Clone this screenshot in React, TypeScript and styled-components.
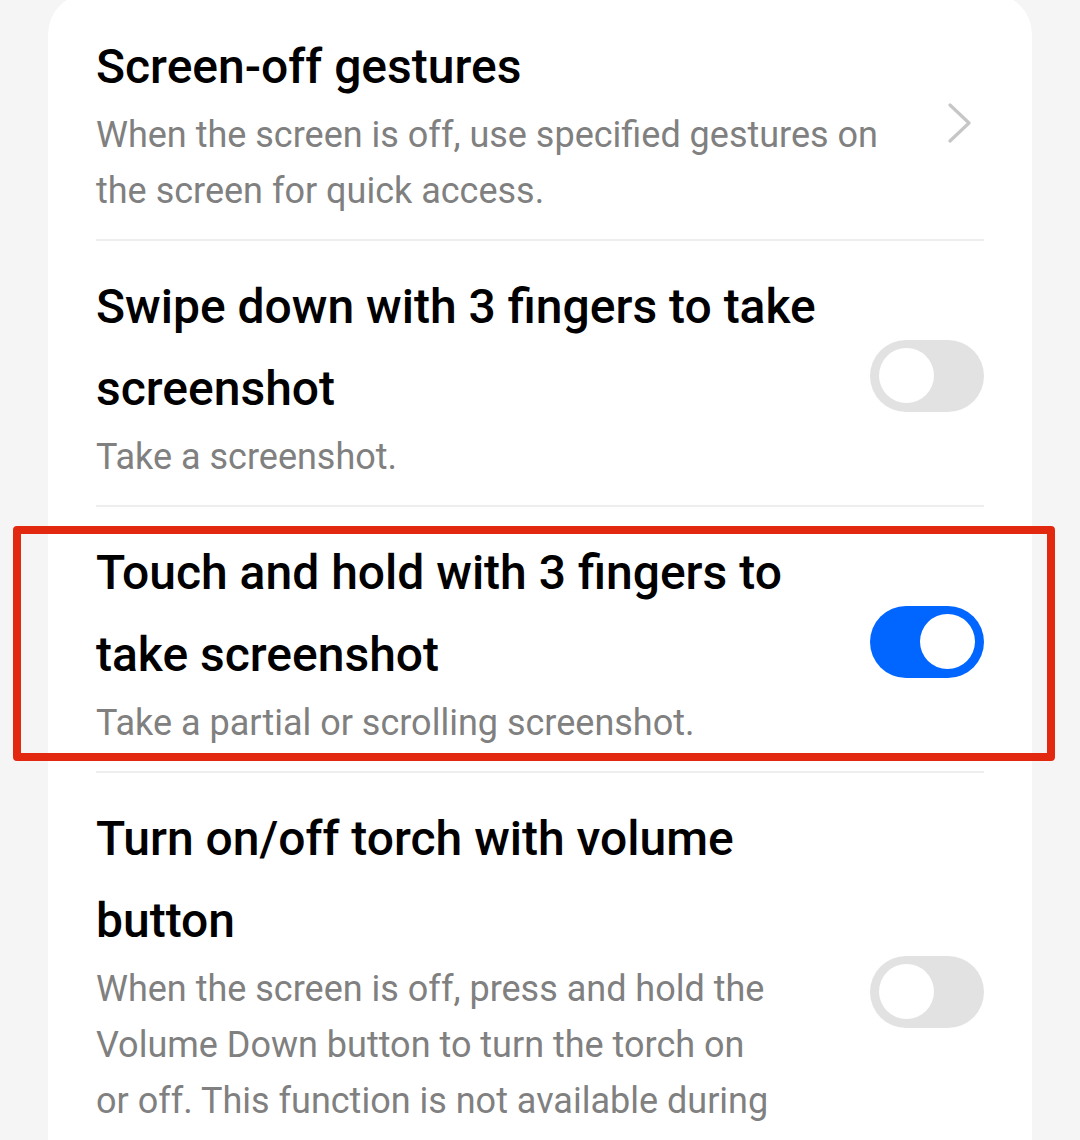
import React from 'react';
import styled, { createGlobalStyle } from 'styled-components';

const GlobalStyle = createGlobalStyle`
  html, body {
    margin: 0;
    padding: 0;
    background: #f5f5f5;
  }
  body {
    font-family: Roboto, "Noto Sans", "Liberation Sans", sans-serif;
    -webkit-font-smoothing: antialiased;
  }
`;

const Page = styled.div`
  width: 1080px;
  height: 1140px;
  padding: 0 48px;
  box-sizing: border-box;
  overflow: hidden;
  display: flex;
  flex-direction: column;
`;

const Card = styled.div`
  flex: 1 0 auto;
  background: #ffffff;
  border-radius: 40px 40px 0 0;
  margin-top: -6px;
  padding: 7px 48px 0;
`;

const Item = styled.div<{ $last?: boolean }>`
  position: relative;
  display: flex;
  align-items: center;
  gap: 24px;
  padding: 25px 0 20px;
  border-bottom: ${(p) => (p.$last ? 'none' : '2px solid #eeeeee')};
`;

const TextCol = styled.div`
  flex: 1;
  min-width: 0;
`;

const Title = styled.div`
  font-size: 48px;
  line-height: 82px;
  font-weight: 500;
  color: #000000;
  margin-bottom: -1px;
`;

const Desc = styled.div<{ $narrow?: boolean }>`
  font-size: 36px;
  line-height: 56px;
  font-weight: 400;
  color: #808080;
  padding-right: ${(p) => (p.$narrow ? '62px' : '0')};
`;

const Track = styled.div<{ $on: boolean }>`
  flex: none;
  width: 114px;
  height: 72px;
  border-radius: 36px;
  background: ${(p) => (p.$on ? '#0066ff' : '#e2e2e2')};
  display: flex;
  align-items: center;
  justify-content: ${(p) => (p.$on ? 'flex-end' : 'flex-start')};
  padding: 0 9px;
  box-sizing: border-box;
`;

const Knob = styled.div`
  width: 55px;
  height: 55px;
  border-radius: 50%;
  background: #ffffff;
`;

const Chevron = styled.svg`
  flex: none;
  width: 36px;
  height: 40px;
`;

const Highlight = styled.div`
  position: absolute;
  top: 19px;
  bottom: 10px;
  left: -83px;
  right: -71px;
  border: 8px solid #e2290f;
  border-radius: 4px;
  pointer-events: none;
`;

type Row = {
  title: string;
  desc: string;
  control: 'chevron' | 'off' | 'on';
  marked?: boolean;
};

const rows: Row[] = [
  {
    title: 'Screen-off gestures',
    desc: 'When the screen is off, use specified gestures on the screen for quick access.',
    control: 'chevron',
  },
  {
    title: 'Swipe down with 3 fingers to take screenshot',
    desc: 'Take a screenshot.',
    control: 'off',
  },
  {
    title: 'Touch and hold with 3 fingers to take screenshot',
    desc: 'Take a partial or scrolling screenshot.',
    control: 'on',
    marked: true,
  },
  {
    title: 'Turn on/off torch with volume button',
    desc: 'When the screen is off, press and hold the Volume Down button to turn the torch on or off. This function is not available during audio playback.',
    control: 'off',
  },
];

const App = () => {
  return (
    <>
      <GlobalStyle />
      <Page>
        <Card>
          {rows.map((r, i) => (
            <Item key={r.title} $last={i === rows.length - 1}>
              <TextCol>
                <Title>{r.title}</Title>
                <Desc $narrow={r.control !== 'chevron'}>{r.desc}</Desc>
              </TextCol>
              {r.control === 'chevron' ? (
                <Chevron viewBox="0 0 36 40">
                  <polyline
                    points="2,2 21,20 2,38"
                    fill="none"
                    stroke="#c6c6c6"
                    strokeWidth="3.2"
                    strokeLinecap="round"
                    strokeLinejoin="round"
                  />
                </Chevron>
              ) : (
                <Track $on={r.control === 'on'}>
                  <Knob />
                </Track>
              )}
              {r.marked && <Highlight />}
            </Item>
          ))}
        </Card>
      </Page>
    </>
  );
};

export default App;
